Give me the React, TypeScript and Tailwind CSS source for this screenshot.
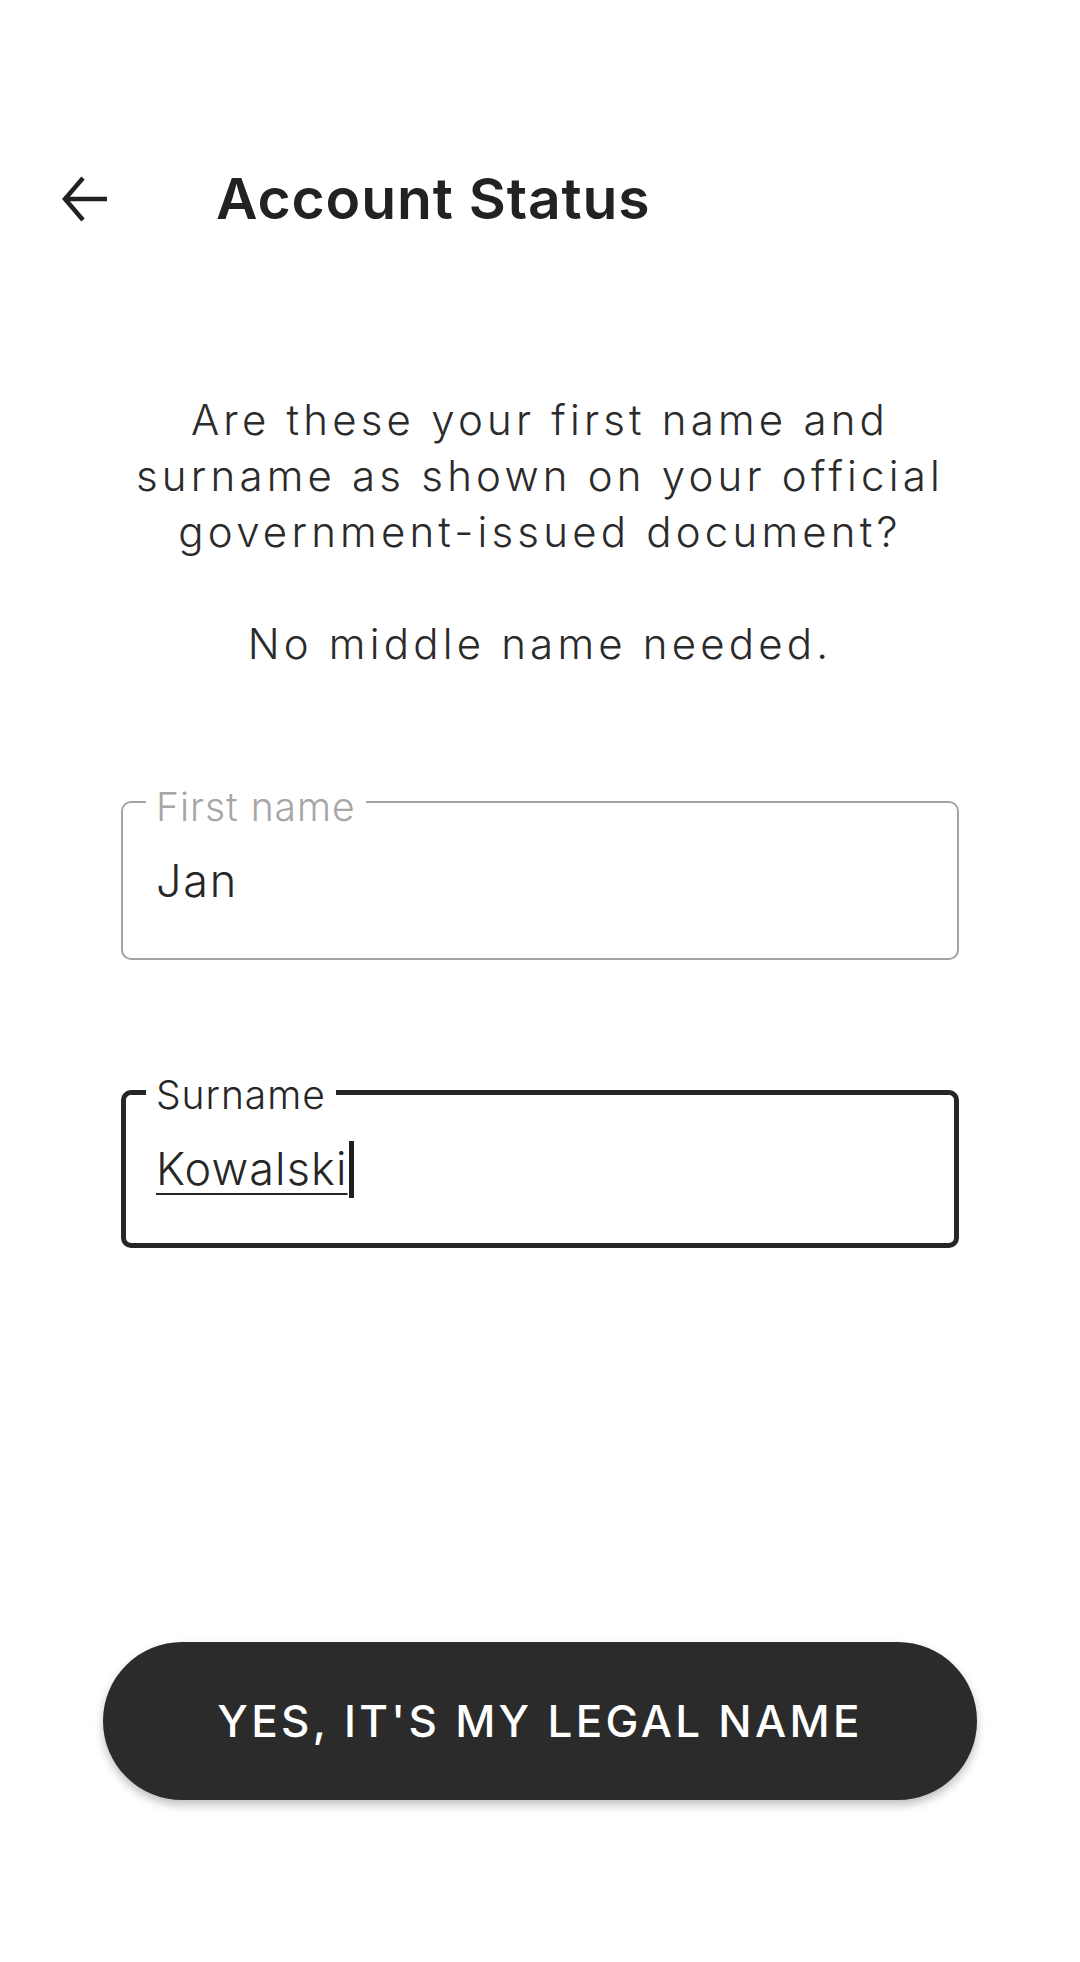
import React from "react";

const FONT = { fontFamily: "Inter, Lato, 'Noto Sans', 'Liberation Sans', sans-serif" };

function BackArrow() {
  return (
    <svg width="48" height="48" viewBox="0 0 48 48" fill="none">
      <path d="M47 24H4" stroke="#222222" strokeWidth="4.5" />
      <path d="M23 3L5 24l18 21" stroke="#222222" strokeWidth="4.5" strokeLinejoin="miter" />
    </svg>
  );
}

interface FieldProps {
  label: string;
  value: string;
  focused?: boolean;
}

function OutlinedField({ label, value, focused }: FieldProps) {
  return (
    <div
      className={
        focused
          ? "relative mx-[121px] h-[158px] rounded-[10px] border-[5px] border-[#262626] flex items-center pl-[30px]"
          : "relative mx-[121px] h-[159px] rounded-[10px] border-[2px] border-[#a3a3a3] flex items-center pl-[33px]"
      }
    >
      <span
        className={
          focused
            ? "absolute left-[20px] -top-[23px] px-[10px] bg-white text-[39px] leading-[46px] text-[#262626] font-light tracking-[0.025em]"
            : "absolute left-[23px] -top-[19px] px-[10px] bg-white text-[39px] leading-[46px] text-[#a6a6a6] font-light tracking-[0.025em]"
        }
      >
        {label}
      </span>
      {focused ? (
        <span className="flex items-center text-[45px] leading-[56px] text-[#262626] font-light tracking-[0.025em]">
          <span className="underline decoration-[2px] underline-offset-[8px]">{value}</span>
          <span className="ml-[1px] w-[5px] h-[57px] bg-[#1f1f1f]" />
        </span>
      ) : (
        <span className="text-[45px] leading-[56px] text-[#262626] font-light tracking-[0.04em]">{value}</span>
      )}
    </div>
  );
}

export default function App() {
  return (
    <div className="w-[1080px] h-[1962px] bg-white flex flex-col" style={FONT}>
      <header className="mt-[143px] h-[112px] flex items-center pl-[60px]">
        <BackArrow />
        <h1 className="ml-[108px] text-[57px] leading-[64px] font-semibold text-[#222222] tracking-[0.015em]">
          Account Status
        </h1>
      </header>

      <p className="mt-[137px] text-center text-[42px] leading-[56px] font-light text-[#2b2b2b] tracking-[0.1em]">
        Are these your first name and
        <br />
        surname as shown on your official
        <br />
        government-issued document?
        <br />
        <br />
        No middle name needed.
      </p>

      <div className="mt-[129px]">
        <OutlinedField label="First name" value="Jan" />
      </div>
      <div className="mt-[130px]">
        <OutlinedField label="Surname" value="Kowalski" focused />
      </div>

      <button className="mt-[394px] mx-[103px] h-[158px] rounded-full bg-[#2b2b2b] shadow-[0_5px_10px_rgba(0,0,0,0.25)] text-white text-[44px] font-medium tracking-[0.075em]">
        YES, IT'S MY LEGAL NAME
      </button>
    </div>
  );
}
